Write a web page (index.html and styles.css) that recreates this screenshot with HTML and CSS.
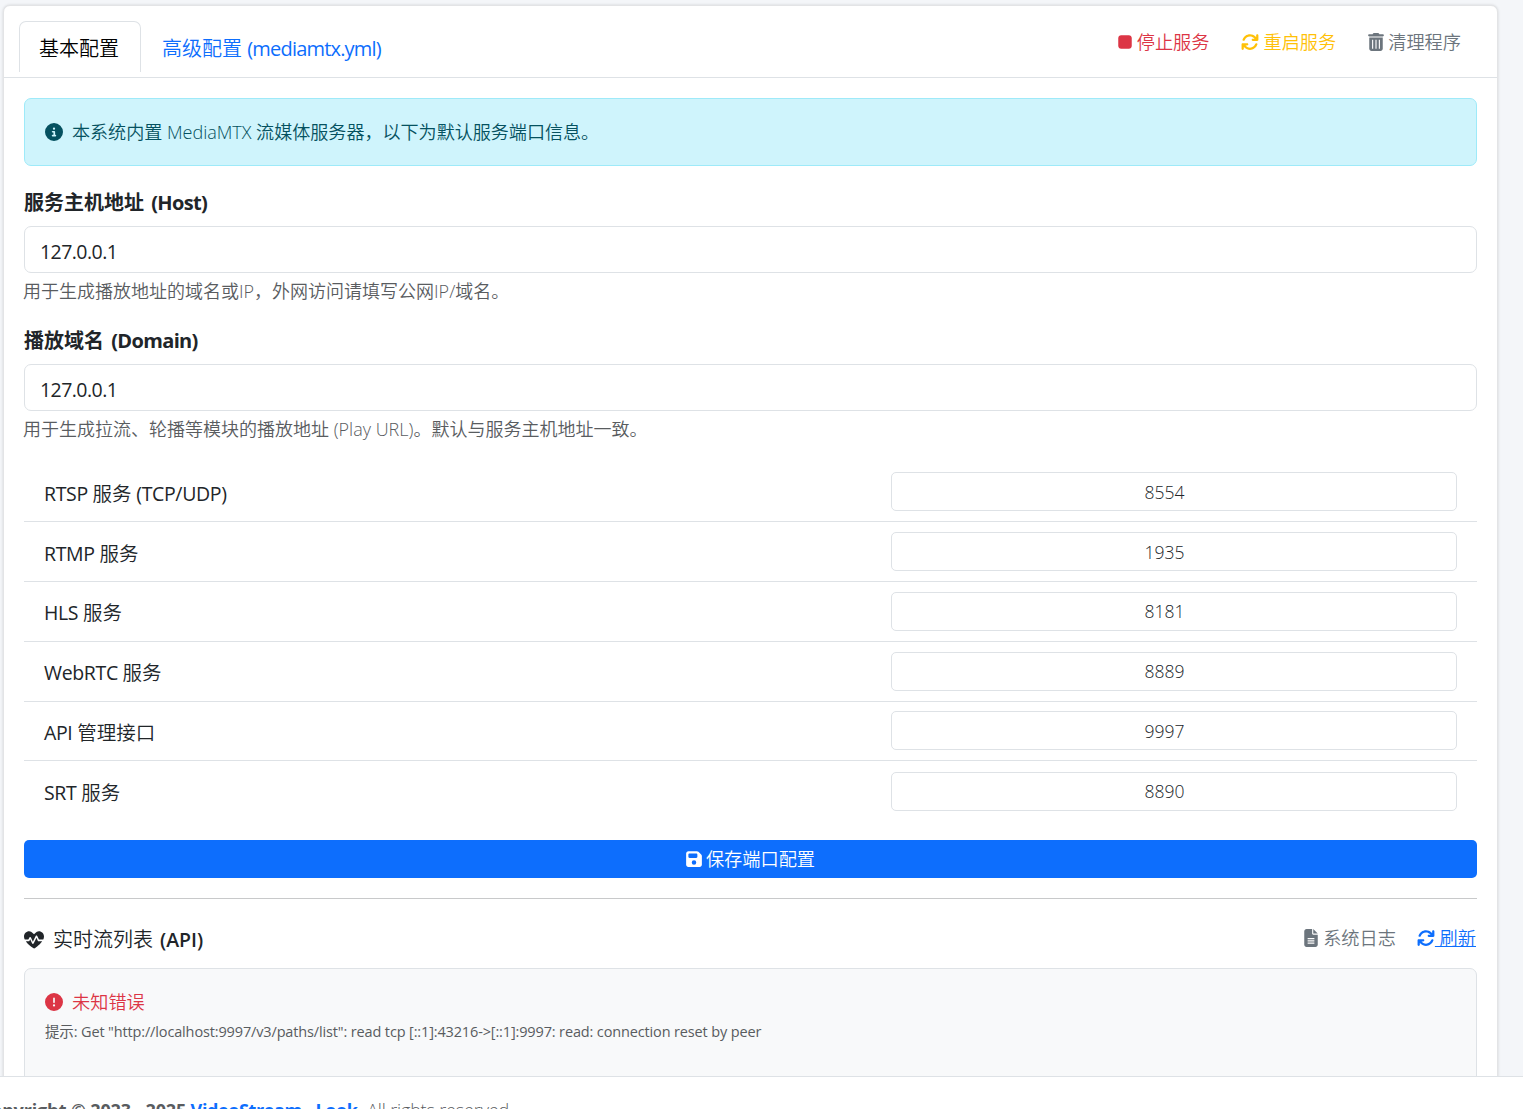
FILE: index.html
```html
<!DOCTYPE html>
<html lang="zh-CN">

<head>
    <meta charset="UTF-8">
    <meta name="viewport" content="width=device-width, initial-scale=1.0">
    <title>MediaMTX 流媒体配置</title>
    <link rel="stylesheet" href="styles.css">
</head>

<body>
    <!-- shared icons -->
    <svg class="icon-defs" aria-hidden="true">
        <symbol id="icon-stop" viewBox="0 0 384 512">
            <path d="M0 144c0-44 36-80 80-80h224c44 0 80 36 80 80v224c0 44-36 80-80 80H80c-44 0-80-36-80-80z"/>
        </symbol>
        <symbol id="icon-sync" viewBox="0 0 512 512">
            <path d="M105 203C126 144 187 96 256 96c45 0 83 18 111 46l18 18h-50c-18 0-32 14-32 32s14 32 32 32h128c18 0 32-14 32-32V64c0-18-14-32-32-32s-32 14-32 32v51l-18-18C369 53 315 32 256 32 159 32 76 94 45 182c-6 16 3 35 20 40 16 6 34-3 40-19zM39 289c-5 2-10 4-14 9-4 4-7 8-8 14-1 2-1 5-1 8v128c0 18 14 32 32 32s32-14 32-32v-51l18 18c44 44 99 65 158 65 97 0 180-62 211-150 6-16-3-35-20-40-16-6-34 3-40 19-21 60-82 107-151 107-45 0-83-18-111-46l-18-18h50c18 0 32-14 32-32s-14-32-32-32H48c-3 0-6 0-9 1z"/>
        </symbol>
        <symbol id="icon-trash" viewBox="0 0 448 512">
            <path fill-rule="evenodd" d="M135 18C141 7 152 0 164 0h120c12 0 23 7 29 18l7 14h96c18 0 32 14 32 32s-14 32-32 32H32C14 96 0 82 0 64s14-32 32-32h96zM32 128h384v320c0 35-29 64-64 64H96c-35 0-64-29-64-64zm80 64v256h32V192zm96 0v256h32V192zm96 0v256h32V192z"/>
        </symbol>
        <symbol id="icon-info" viewBox="0 0 512 512">
            <path fill-rule="evenodd" d="M256 512a256 256 0 1 0 0-512 256 256 0 0 0 0 512zm-40-176h24v-64h-24c-13 0-24-11-24-24s11-24 24-24h48c13 0 24 11 24 24v88h8c13 0 24 11 24 24s-11 24-24 24h-80c-13 0-24-11-24-24s11-24 24-24zm40-208a32 32 0 1 1 0 64 32 32 0 0 1 0-64z"/>
        </symbol>
        <symbol id="icon-error" viewBox="0 0 512 512">
            <path fill-rule="evenodd" d="M256 512a256 256 0 1 0 0-512 256 256 0 0 0 0 512zm0-384c13 0 24 11 24 24v112c0 13-11 24-24 24s-24-11-24-24V152c0-13 11-24 24-24zm-32 224a32 32 0 1 1 64 0 32 32 0 0 1-64 0z"/>
        </symbol>
        <symbol id="icon-save" viewBox="0 0 448 512">
            <path fill-rule="evenodd" d="M64 32C29 32 0 61 0 96v320c0 35 29 64 64 64h320c35 0 64-29 64-64V174c0-17-7-33-19-45l-78-78c-12-12-28-19-45-19zm0 96c0-18 14-32 32-32h192c18 0 32 14 32 32v64c0 18-14 32-32 32H96c-18 0-32-14-32-32zm160 160a64 64 0 1 1 0 128 64 64 0 0 1 0-128z"/>
        </symbol>
        <symbol id="icon-heart" viewBox="0 0 512 512">
            <path d="M228 81l28 27 28-27C312 52 349 32 380 32c74 0 132 60 132 133 0 31-9 56-20 75H383l-44-88c-8-16-31-16-40 0l-73 148-48-108c-8-17-33-17-41 0l-18 41-9 7H20C9 221 0 196 0 165 0 92 58 32 132 32c31 0 68 20 96 49zM48 288h70c10 0 19-6 23-15l17-38 48 107c8 17 32 18 41 1l73-147 32 76c4 9 12 16 22 16h90c-24 41-114 132-178 174-15 12-37 12-52 0C162 416 75 339 48 288z"/>
        </symbol>
        <symbol id="icon-file" viewBox="0 0 384 512">
            <path fill-rule="evenodd" d="M64 0C29 0 0 29 0 64v384c0 35 29 64 64 64h256c35 0 64-29 64-64V160H256c-18 0-32-14-32-32V0zm192 0v128h128zM96 256h192v32H96zm0 64h192v32H96zm0 64h192v32H96z"/>
        </symbol>
    </svg>

    <div class="card">
        <div class="card-header">
            <nav class="tabs">
                <a class="tab active">基本配置</a>
                <a class="tab">高级配置 <span class="tab-file">(mediamtx.yml)</span></a>
            </nav>
            <div class="actions">
                <button class="action danger"><svg class="icon small"><use href="#icon-stop"/></svg>停止服务</button>
                <button class="action warning"><svg class="icon"><use href="#icon-sync"/></svg>重启服务</button>
                <button class="action secondary"><svg class="icon narrow"><use href="#icon-trash"/></svg>清理程序</button>
            </div>
        </div>

        <div class="card-body">
            <div class="alert">
                <svg class="icon"><use href="#icon-info"/></svg>
                <span>本系统内置 MediaMTX 流媒体服务器，以下为默认服务端口信息。</span>
            </div>

            <div class="form-group">
                <label for="host">服务主机地址 <span>(Host)</span></label>
                <input type="text" id="host" class="form-control" value="127.0.0.1">
                <p class="help">用于生成播放地址的域名或IP，外网访问请填写公网IP/域名。</p>
            </div>
            <div class="form-group">
                <label for="domain">播放域名 <span>(Domain)</span></label>
                <input type="text" id="domain" class="form-control" value="127.0.0.1">
                <p class="help">用于生成拉流、轮播等模块的播放地址 (Play URL)。默认与服务主机地址一致。</p>
            </div>

            <div class="ports">
                <div class="port-row"><span class="port-name">RTSP <i>服务</i> (TCP/UDP)</span><input type="text" class="port-input" value="8554"></div>
                <div class="port-row"><span class="port-name">RTMP <i>服务</i></span><input type="text" class="port-input" value="1935"></div>
                <div class="port-row"><span class="port-name">HLS <i>服务</i></span><input type="text" class="port-input" value="8181"></div>
                <div class="port-row"><span class="port-name">WebRTC <i>服务</i></span><input type="text" class="port-input" value="8889"></div>
                <div class="port-row"><span class="port-name">API <i>管理接口</i></span><input type="text" class="port-input" value="9997"></div>
                <div class="port-row"><span class="port-name">SRT <i>服务</i></span><input type="text" class="port-input" value="8890"></div>
            </div>

            <button class="save-btn"><svg class="icon narrow"><use href="#icon-save"/></svg>保存端口配置</button>

            <div class="stream-header">
                <h5 class="stream-title"><svg class="icon"><use href="#icon-heart"/></svg>实时流列表 <b>(API)</b></h5>
                <div class="stream-links">
                    <a class="link-log"><svg class="icon small"><use href="#icon-file"/></svg>系统日志</a>
                    <a class="link-refresh"><svg class="icon"><use href="#icon-sync"/></svg><span>&nbsp;刷新</span></a>
                </div>
            </div>

            <div class="stream-list">
                <div class="error-title"><svg class="icon"><use href="#icon-error"/></svg>未知错误</div>
                <div class="error-hint">提示: Get "http://localhost:9997/v3/paths/list": read tcp [::1]:43216-&gt;[::1]:9997: read: connection reset by peer</div>
            </div>
        </div>
    </div>

    <footer class="footer"><strong>Copyright © 2023 - 2025 <a>VideoStream - Look</a>.</strong> All rights reserved.</footer>
</body>

</html>
```
FILE: styles.css
```css
:root {
    --primary: #0d6efd;
    --danger: #dc3545;
    --warning: #ffc107;
    --secondary: #6c757d;
    --text: #212529;
    --border: #dee2e6;
}

* {
    margin: 0;
    padding: 0;
    box-sizing: border-box;
}

body {
    height: 1109px;
    overflow: hidden;
    font-family: "Open Sans", "Noto Sans CJK SC", sans-serif;
    font-size: 20px;
    line-height: 30px;
    color: var(--text);
    background-color: #f4f6f9;
}

button,
input {
    font: inherit;
    color: inherit;
}

.icon-defs {
    display: none;
}

.icon {
    width: 18px;
    height: 18px;
    flex-shrink: 0;
    fill: currentColor;
}

.icon.narrow {
    width: 16px;
}

.icon.small {
    width: 14px;
}

.card {
    width: 1495px;
    height: 1090px;
    margin: 5px 0 0 3px;
    border: 1px solid #e3e4e6;
    border-radius: 7px;
    background-color: #fff;
    box-shadow: 0 0 3px rgba(0, 0, 0, 0.15);
}

.card-header {
    display: flex;
    justify-content: space-between;
    height: 72px;
    padding: 15px 20px 0 15px;
    border-bottom: 1px solid var(--border);
}

.tabs {
    display: flex;
    height: 51px;
}

.tab {
    padding: 12px 20px 0;
    border: 1px solid transparent;
    border-bottom: none;
    border-radius: 7px 7px 0 0;
    color: var(--primary);
    font-weight: 350;
    white-space: nowrap;
}

.tab.active {
    width: 122px;
    padding-left: 19px;
    border-color: var(--border);
    color: #000;
}

.tab-file {
    font-weight: 400;
    letter-spacing: -0.8px;
}

.actions {
    display: flex;
    gap: 32px;
    height: 41px;
    padding-right: 16px;
    font-size: 18.2px;
}

.action {
    display: flex;
    align-items: center;
    gap: 4px;
    border: none;
    background: none;
    font-weight: 350;
}

.action.danger {
    gap: 5px;
}

.danger {
    color: var(--danger);
}

.warning {
    color: var(--warning);
}

.secondary {
    color: var(--secondary);
}

.card-body {
    padding: 20px;
}

.alert {
    display: flex;
    align-items: center;
    gap: 9px;
    height: 68px;
    margin-bottom: 22px;
    padding: 0 20px;
    border: 1px solid #9eeaf9;
    border-radius: 7px;
    background-color: #cff4fc;
    color: #055160;
    font-size: 18.1px;
    font-weight: 350;
    letter-spacing: -0.04px;
}

.form-group {
    height: 138px;
}

.form-group label {
    display: block;
    height: 38px;
    font-weight: 700;
    word-spacing: 2px;
}

.form-group label span {
    letter-spacing: -0.65px;
}

.form-control {
    display: block;
    width: 100%;
    height: 47px;
    padding: 3px 15px 0;
    border: 1px solid var(--border);
    border-radius: 7px;
    font-size: 19.5px;
    letter-spacing: -0.55px;
}

.help {
    padding-top: 3px;
    color: #595c5f;
    font-size: 18px;
    font-weight: 350;
    text-indent: -1px;
}

.ports {
    margin-top: -1.6px;
}

.port-row {
    display: flex;
    align-items: center;
    justify-content: space-between;
    height: 59.8px;
    padding: 0 20px;
    border-bottom: 1px solid var(--border);
}

.port-row:last-child {
    border-bottom: none;
}

.port-name {
    padding-top: 4px;
    font-size: 19.5px;
    letter-spacing: -0.35px;
}

.port-name i {
    font-style: normal;
    font-weight: 350;
    letter-spacing: 0;
}

.port-input {
    width: 566px;
    height: 39px;
    padding-right: 19px;
    border: 1px solid var(--border);
    border-radius: 5px;
    text-align: center;
    font-size: 17.5px;
    font-weight: 350;
}

.save-btn {
    display: flex;
    align-items: center;
    justify-content: center;
    gap: 4px;
    width: 100%;
    height: 38px;
    margin-top: 18.6px;
    border: none;
    border-radius: 5px;
    background-color: var(--primary);
    color: #fff;
    font-size: 18.2px;
    font-weight: 350;
}

.stream-header {
    display: flex;
    justify-content: space-between;
    height: 70px;
    margin-top: 20px;
    padding-top: 25px;
    border-top: 1px solid #c8c9ca;
}

.stream-title {
    display: flex;
    align-items: center;
    height: 33px;
    font-size: 20px;
    font-weight: 350;
}

.stream-title .icon {
    width: 20px;
    height: 20px;
    margin-right: 9px;
}

.stream-title b {
    margin-left: 7px;
    font-size: 19.5px;
    font-weight: 600;
}

.stream-links {
    display: flex;
    gap: 21px;
    height: 28px;
    padding-right: 1px;
    font-size: 18.2px;
    font-weight: 350;
}

.stream-links a {
    display: flex;
    align-items: center;
}

.link-log {
    gap: 5px;
    color: var(--secondary);
}

.link-refresh {
    color: var(--primary);
}

.link-refresh span {
    text-decoration: underline;
}

.stream-list {
    height: 120px;
    padding: 19px 20px;
    border: 1px solid var(--border);
    border-radius: 7px;
    background-color: #f8f9fa;
}

.error-title {
    display: flex;
    align-items: center;
    gap: 9px;
    height: 28px;
    color: var(--danger);
    font-size: 18.2px;
    font-weight: 350;
}

.error-hint {
    padding-top: 1px;
    color: #595c5f;
    font-size: 14.5px;
    letter-spacing: -0.14px;
}

.footer {
    position: fixed;
    left: 0;
    right: 0;
    bottom: 0;
    height: 33px;
    padding-top: 18px;
    border-top: 1px solid var(--border);
    background-color: #fff;
    color: #595c5f;
    font-size: 18px;
    font-weight: 350;
    letter-spacing: -0.15px;
    white-space: nowrap;
    overflow: hidden;
    text-indent: -20px;
}

.footer strong {
    font-weight: 700;
}

.footer a {
    color: var(--primary);
    letter-spacing: -0.4px;
}
```
